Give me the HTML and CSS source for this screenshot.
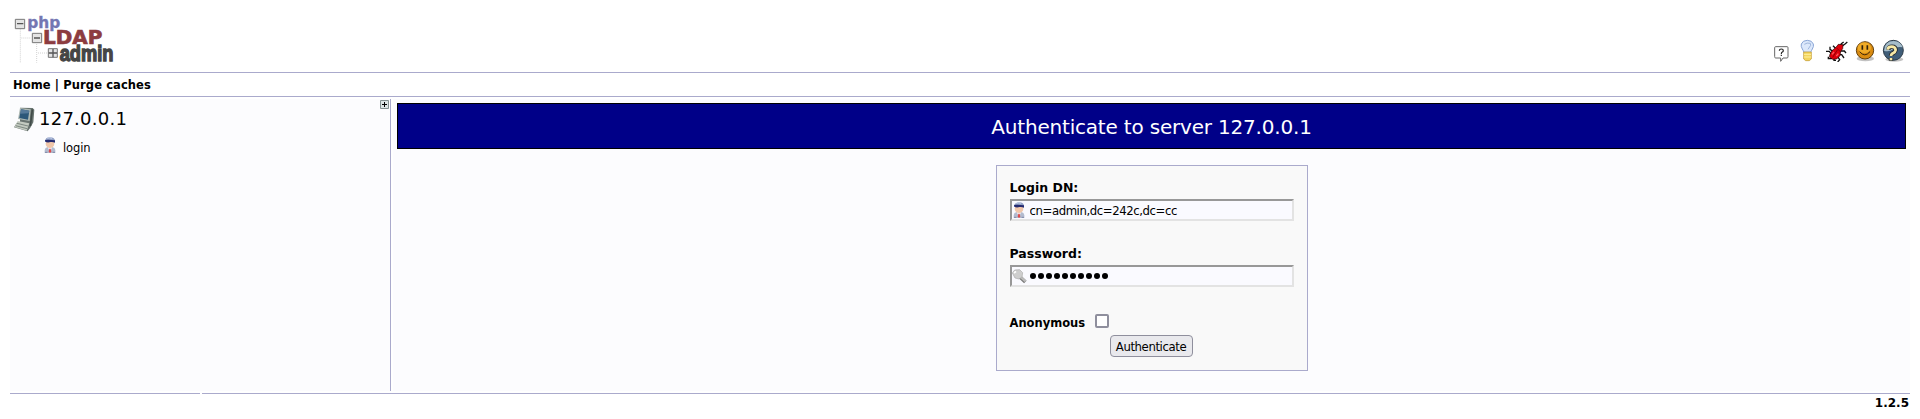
FILE: index.html
```html
<!DOCTYPE html>
<html lang="en">
<head>
<meta charset="utf-8">
<title>phpLDAPadmin</title>
<link rel="stylesheet" href="styles.css">
</head>
<body>
<svg class="defs" width="0" height="0" aria-hidden="true">
  <symbol id="user" viewBox="0 0 36 48">
    <path d="M2 48V39q1-7 9-9h14q8 2 9 9v9z" fill="#b3bbcf"/>
    <path d="M11 30l7 14 7-14z" fill="#f7f5fa"/>
    <path d="M16 35h4l2 9-4 4-4-4z" fill="#e04a4a"/>
    <path d="M3 46h7M26 46h7" stroke="#8089a8" stroke-width="3"/>
    <ellipse cx="18" cy="20" rx="13" ry="13" fill="#f0c6aa"/>
    <path d="M3 14Q3 1 18 1t15 12z" fill="#93a2c6"/>
    <path d="M3 9q10-2 30 1v7q-6-3-13-2-10 3-16-1z" fill="#252a70"/>
    <path d="M10 4q7-3 14 0" stroke="#c2cee8" stroke-width="3" fill="none"/>
  </symbol>
</svg>
<header class="top">
  <svg class="logo" viewBox="30 30 318 165">
    <g class="branches"><path d="M61 88V188M64 114H94M110 132V188M114 159H142"/></g>
    <g fill="#e4e4e4" stroke="#777" stroke-width="3">
      <path d="M46 58h28v28H46zM97 100h28v28H97z"/><path d="M145 146h27v26h-27z"/>
    </g>
    <path d="M51 71h19M102 114h18M146 159h25M159 147v25" stroke="#555" stroke-width="4"/>
    <text class="php" x="82" y="83" textLength="99" lengthAdjust="spacingAndGlyphs">php</text>
    <text class="ldap" x="129" y="131" textLength="178" lengthAdjust="spacingAndGlyphs">LDAP</text>
    <text class="admin" x="179" y="183" textLength="161" lengthAdjust="spacingAndGlyphs">admin</text>
  </svg>
  <nav class="tools">
    <svg class="i-request" viewBox="39 24 51 72">
      <path d="M47 50h34q3 0 3 3v27q0 4-3 4H69l-7 10V84H47q-3 0-3-4V53q0-3 3-3z" fill="#fff" stroke="#666" stroke-width="3"/>
      <path d="M58 62q0-5 6-5t6 5q0 3-4 5-2 1-2 5M64 74v4" fill="none" stroke="#222" stroke-width="3.5"/>
    </svg>
    <svg class="i-bulb" viewBox="117 24 48 72">
      <path d="M132 67q-2-5-5-10-5-8-3-15 4-11 18-11t18 11q2 7-3 15-3 5-5 10z" fill="#dce8fb" stroke="#89a5d6" stroke-width="3"/>
      <path d="M133 43q8-6 18-3l1 6-8 12" fill="none" stroke="#9fb6dc" stroke-width="3"/>
      <path d="M131 66h23v21l-6 5h-11l-6-5z" fill="#f3d55d" stroke="#bd942b" stroke-width="2"/>
      <path d="M132 73h21M132 81h21" stroke="#fff0a0" stroke-width="3"/>
    </svg>
    <svg class="i-bug" viewBox="195 24 72 72">
      <path d="M198 64h10l7 9M205 80v6h9l7-7M222 83v8h6M210 50v8l10 7M219 47l9 9M240 51l4-10 7-5M247 48l9-7 6-5M241 63h12l5 6M239 74h6l7 10M233 80l6 9-6 7" fill="none" stroke="#111" stroke-width="4"/>
      <path d="M209 75l7-13 12-10 7-9 14 1-1 12-6 8-2 13-10 10-12 1-9-6z" fill="#df000b" stroke="#220000" stroke-width="2"/>
      <path d="M230 54l12 12M232 60l-14 22" stroke="#600" stroke-width="2"/>
      <path d="M216 73l6-7M229 78l6-7" stroke="#ff5858" stroke-width="4"/>
    </svg>
    <svg class="i-smile" viewBox="285 24 60 72">
      <ellipse cx="316" cy="86" rx="26" ry="8" fill="#777" opacity=".45"/>
      <circle cx="315" cy="61" r="26" fill="#d98b11" stroke="#65420e" stroke-width="3"/>
      <ellipse cx="313" cy="53" rx="20" ry="16" fill="#f7b52d" opacity=".75"/>
      <path d="M307 46v13M322 46v13" stroke="#30200a" stroke-width="5"/>
      <path d="M299 65q15 19 31 0" fill="none" stroke="#3e2808" stroke-width="3"/>
    </svg>
    <svg class="i-help" viewBox="366 24 69 72">
      <ellipse cx="403" cy="88" rx="27" ry="7" fill="#777" opacity=".45"/>
      <circle cx="400" cy="61" r="30" fill="#405e79" stroke="#2d3c49" stroke-width="3"/>
      <path d="M372 62q2-29 29-29 21 1 27 19-18-3-28 5-13 10-28 5z" fill="#a5bdca"/>
      <path d="M385 59q1-9 11-9 11 0 11 10-1 6-7 9-7 3-7 9M393 84v8" fill="none" stroke="#22282d" stroke-width="13"/>
      <path d="M383 59q1-9 12-9t12 10q-1 6-7 9-7 3-7 9M393 84v7" fill="none" stroke="#f7e9a6" stroke-width="8"/>
    </svg>
  </nav>
</header>
<div class="menu"><span>Home | Purge caches</span></div>
<main class="content">
  <aside class="tree">
    <div class="server">
      <svg class="computer" viewBox="42 50 63 75">
        <path d="M60 52l38 1 5 5-3 38-9 16-8 11-41-12 8-13 10-4z" fill="#68736f"/>
        <path d="M60 53l32 4-3 35-35-6z" fill="#aeb9b4"/>
        <path d="M63 57l25 4-4 27-26-5z" fill="#2c5779"/>
        <path d="M63 57l25 4-2 8-25 1z" fill="#55799a"/>
        <path d="M53 92l35 7-8 22-37-11z" fill="#c3cac0"/>
        <path d="M47 106l34 9M51 99l33 8" stroke="#7d8882" stroke-width="3"/>
        <path d="M97 57l-6 50" stroke="#414b49" stroke-width="5"/>
      </svg>
      <span class="host">127.0.0.1</span>
    </div>
    <div class="login"><svg class="user"><use href="#user"/></svg><span>login</span></div>
    <svg class="expand" viewBox="0 0 9 9"><path d="M.5.5h8v8h-8z" fill="#dce5e5" stroke="#839090"/><path d="M2 4.5h5M4.5 2v5" stroke="#000"/></svg>
  </aside>
  <section class="page">
    <h1><span>Authenticate to server 127.0.0.1</span></h1>
    <form class="auth">
      <label class="label-dn" for="dn">Login DN:</label>
      <div class="field"><svg class="user"><use href="#user"/></svg><input id="dn" type="text" value="cn=admin,dc=242c,dc=cc"></div>
      <label class="label-pass" for="pass">Password:</label>
      <div class="field">
        <svg class="key" viewBox="0 0 45 45"><path d="M24 24l16 15" stroke="#777" stroke-width="11"/><path d="M24 22l17 15" stroke="#bbb" stroke-width="7"/><path d="M1 12L8 3l15-1 9 9-2 13-9 6-12-3z" fill="#cecece" stroke="#aaa" stroke-width="2"/><path d="M6 12l6-5" stroke="#fff" stroke-width="5"/></svg>
        <span class="dots"><i></i><i></i><i></i><i></i><i></i><i></i><i></i><i></i><i></i><i></i></span>
      </div>
      <div class="anon"><label for="anon">Anonymous</label><input id="anon" type="checkbox"></div>
      <button type="button">Authenticate</button>
    </form>
  </section>
</main>
<footer class="foot"><div class="foot-left"></div><div class="foot-right">1.2.5</div></footer>
</body>
</html>
```
FILE: styles.css
```css
* { box-sizing: border-box; }
body {
  margin: 0 10px;
  height: 419px;
  overflow: hidden;
  background: #fff;
  color: #000;
  font-family: "DejaVu Sans", sans-serif;
  font-size: 11px;
}
svg { display: block; flex: none; }
.defs { display: none; }
span { white-space: nowrap; }

.top { display: flex; justify-content: space-between; height: 73px; padding: 10px 5px 0 0; border-bottom: 1px solid #aac; }
.logo { width: 106px; height: 55px; overflow: visible; }
.branches { fill: none; stroke: #d2d2d2; stroke-width: 3; stroke-dasharray: 3 3; }
.php { font: bold 49px "DejaVu Sans", sans-serif; fill: #7477b2; stroke: #7477b2; stroke-width: 1; }
.ldap { font: bold 57px "DejaVu Sans", sans-serif; fill: #8c3c40; stroke: #8c3c40; stroke-width: 2; }
.admin { font: bold 64px "Liberation Sans", sans-serif; fill: #454545; stroke: #454545; stroke-width: 4; }
.tools { display: flex; padding-top: 28px; }
.tools svg { height: 24px; }
.i-request { width: 17px; margin-right: 9px; }
.i-bulb { width: 16px; margin-right: 10px; }
.i-bug { width: 24px; margin-right: 6px; }
.i-smile { width: 20px; margin-right: 7px; }
.i-help { width: 23px; }

.menu { height: 24px; padding-left: 3px; border-bottom: 1px solid #aac; font-size: 11.5px; font-weight: bold; line-height: 25px; letter-spacing: .1px; }

.content { display: flex; gap: 2px; height: 294px; padding-top: 2px; }
.tree { position: relative; width: 381px; border-right: 1px solid #aac; background: #fcfcfe; }
.server { display: flex; padding: 8px 0 0 4px; }
.computer { width: 21px; height: 25px; }
.host { margin-left: 4px; font-size: 18px; line-height: 24px; letter-spacing: .25px; }
.login { display: flex; padding: 5px 0 0 34px; }
.user { width: 12px; height: 16px; }
.login span { margin-left: 7px; font-size: 11.5px; line-height: 23px; letter-spacing: -.1px; }
.expand { position: absolute; top: 1px; right: 1px; width: 9px; height: 9px; }
.page { flex: 1; padding: 4px 4px 0; background: #fcfcfe; }
h1 { height: 46px; margin: 0; border: 1px solid #000; background: #008; color: #fff; font-size: 20px; font-weight: normal; line-height: 46px; letter-spacing: -.19px; text-align: center; }
.auth { width: 312px; height: 206px; margin: 16px auto 0; padding: 14px 13px 0; border: 1px solid #aac; background: #f9f9f9; }
.auth label { display: block; font-size: 12.5px; font-weight: bold; line-height: 16px; }
.field { display: flex; align-items: center; width: 284px; height: 22px; margin-top: 3px; padding-left: 1px; border: 2px solid; border-color: #989898 #e3e3e3 #e3e3e3 #989898; background: #fafaff; }
.field input { width: 255px; margin: 0 0 0 5px; padding: 0; border: 0; outline: 0; background: none; color: #000; font: 13px "DejaVu Sans Condensed", "Noto Sans", sans-serif; letter-spacing: -.42px; }
.auth .label-pass { margin-top: 25px; }
.key { width: 15px; height: 15px; margin-left: -1px; }
.dots { display: flex; gap: 2px; margin-left: 3px; }
.dots i { width: 6px; height: 6px; border-radius: 3px; background: #000; }
.anon { display: flex; align-items: center; height: 20px; margin-top: 24px; }
.auth .anon label { width: 76px; font-size: 11.5px; padding-top: 3px; }
.anon input { appearance: none; width: 14px; height: 14px; margin: 0 0 0 9px; border: 2px solid #8f8f9d; border-radius: 2px; background: #fff; }
button { display: block; width: 83px; height: 22px; margin: 4px 0 0 100px; padding: 0; border: 1px solid #8f8f9d; border-radius: 4px; background: #e9e9ed; color: #000; font: 13px "DejaVu Sans Condensed", "Noto Sans", sans-serif; letter-spacing: -.4px; }

.foot { display: flex; gap: 2px; padding-top: 2px; }
.foot-left { width: 190px; border-top: 1px solid #aac; height: 20px; }
.foot-right { flex: 1; padding-right: 1px; border-top: 1px solid #aac; font-size: 12px; font-weight: bold; line-height: 18px; text-align: right; }
```
